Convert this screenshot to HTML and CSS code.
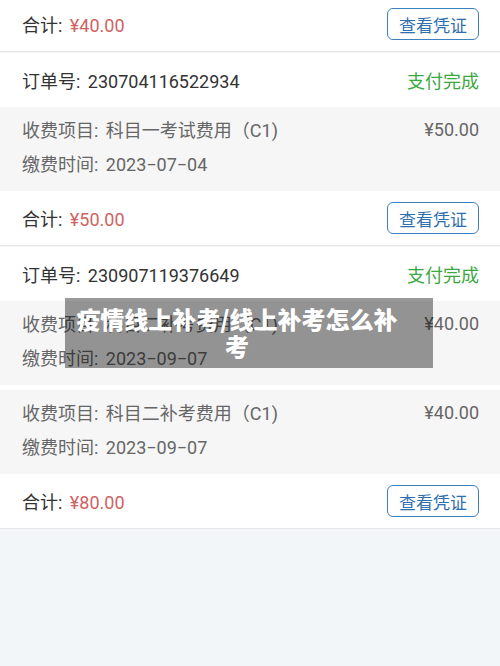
FILE: index.html
```html
<!DOCTYPE html>
<html lang="zh-CN">
<head>
<meta charset="utf-8">
<link rel="stylesheet" href="styles.css">
</head>
<body>
<div class="page">
  <div class="card">
    <div class="total-row">
      <span class="total">合计: <span class="price">¥40.00</span></span>
      <span class="btn">查看凭证</span>
    </div>
  </div>
  <div class="card">
    <div class="order-row">
      <span>订单号: 230704116522934</span>
      <span class="status">支付完成</span>
    </div>
    <div class="item">
      <div class="line"><span>收费项目: 科目一考试费用（C1)</span><span>¥50.00</span></div>
      <div class="line"><span>缴费时间: 2023−07−04</span></div>
    </div>
    <div class="total-row">
      <span class="total">合计: <span class="price">¥50.00</span></span>
      <span class="btn">查看凭证</span>
    </div>
  </div>
  <div class="card">
    <div class="order-row">
      <span>订单号: 230907119376649</span>
      <span class="status">支付完成</span>
    </div>
    <div class="item">
      <div class="line"><span>收费项目: 科目二补考费用（C1)</span><span>¥40.00</span></div>
      <div class="line"><span>缴费时间: 2023−09−07</span></div>
    </div>
    <div class="item">
      <div class="line"><span>收费项目: 科目二补考费用（C1)</span><span>¥40.00</span></div>
      <div class="line"><span>缴费时间: 2023−09−07</span></div>
    </div>
    <div class="total-row">
      <span class="total">合计: <span class="price">¥80.00</span></span>
      <span class="btn">查看凭证</span>
    </div>
  </div>
</div>
<div class="overlay">疫情线上补考/线上补考怎么补考</div>
</body>
</html>
```

FILE: styles.css
```css
html, body {
  margin: 0;
  padding: 0;
  background: #f3f6f8;
  font-family: Roboto, "Noto Sans CJK SC", sans-serif;
  color: #333;
}
.page {
  margin-top: -3px;
}
.card {
  background: #fff;
  border-bottom: 1px solid #e6e6e6;
}
.card + .card {
  margin-top: 1px;
}
.total-row, .order-row {
  height: 54px;
  display: flex;
  align-items: center;
  justify-content: space-between;
  padding: 0 21px 0 22px;
  font-size: 18px;
  word-spacing: 3px;
}
.price {
  color: #cf6262;
}
.status {
  color: #3aa83e;
}
.btn {
  box-sizing: border-box;
  width: 92px;
  height: 32px;
  border: 1.5px solid #3d80bf;
  border-radius: 6px;
  color: #2f6fae;
  font-size: 17px;
  word-spacing: 0;
  display: flex;
  align-items: center;
  justify-content: center;
}
.item {
  background: #f6f6f6;
  padding: 5px 21px 11px 22px;
  color: #666;
  font-size: 18px;
  word-spacing: 3px;
}
.item + .item {
  margin-top: 5px;
}
.line {
  height: 34px;
  display: flex;
  align-items: center;
  justify-content: space-between;
}
.overlay {
  position: absolute;
  left: 65px;
  top: 298px;
  width: 368px;
  height: 70px;
  box-sizing: border-box;
  padding: 7px 35px 0 11px;
  background: rgba(0, 0, 0, 0.4);
  color: #fff;
  font-family: "Noto Sans CJK SC", sans-serif;
  font-weight: 900;
  font-size: 24px;
  line-height: 27px;
  text-align: center;
}
```
